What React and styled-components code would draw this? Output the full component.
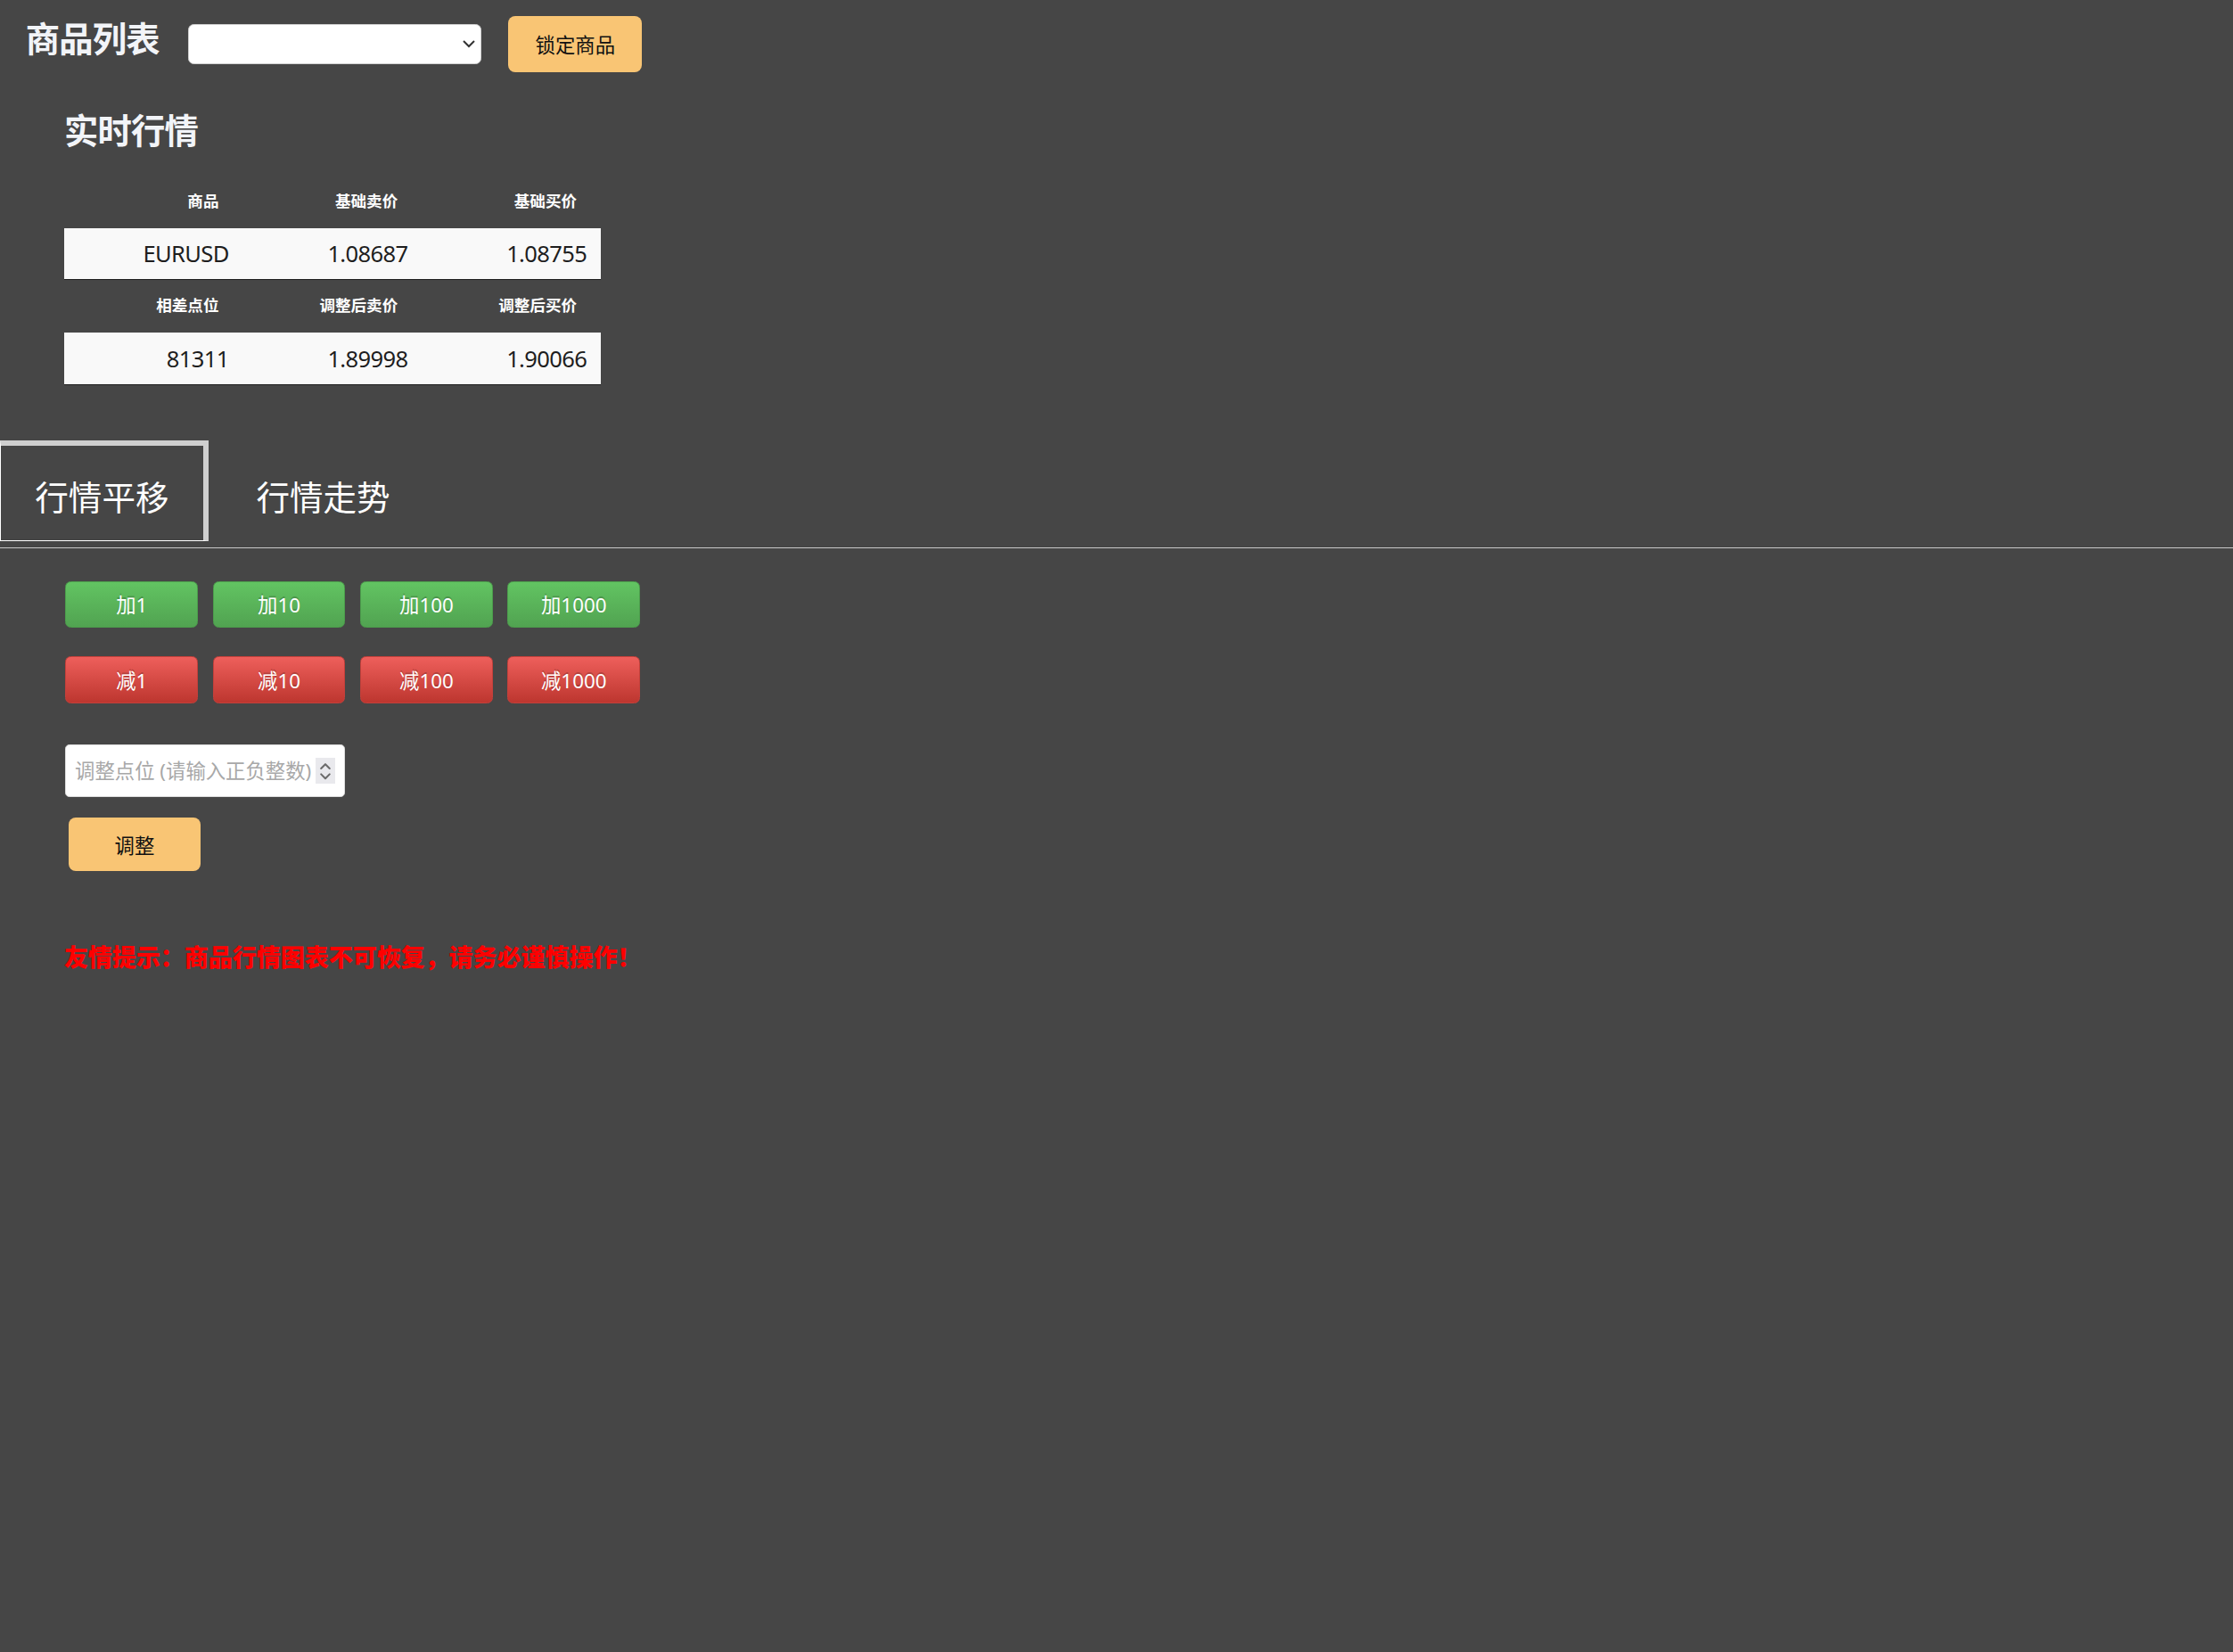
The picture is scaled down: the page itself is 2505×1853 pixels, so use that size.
import React from 'react'
import styled, { createGlobalStyle } from 'styled-components'

const GlobalStyle = createGlobalStyle`
  html, body {
    margin: 0;
    padding: 0;
    background: #464646;
    min-height: 100%;
  }
  body {
    font-family: "Noto Sans", "Noto Sans CJK SC", sans-serif;
  }
`

const quotes = [
  {
    heads: ['商品', '基础卖价', '基础买价'],
    values: ['EURUSD', '1.08687', '1.08755'],
  },
  {
    heads: ['相差点位', '调整后卖价', '调整后买价'],
    values: ['81311', '1.89998', '1.90066'],
  },
]

const steps = [1, 10, 100, 1000]

export default function App() {
  return (
    <Page>
      <GlobalStyle />
      <Header>
        <Title>商品列表</Title>
        <Select defaultValue="">
          <option value=""></option>
          <option value="EURUSD">EURUSD</option>
        </Select>
        <OrangeButton>锁定商品</OrangeButton>
      </Header>

      <Section>
        <SectionTitle>实时行情</SectionTitle>
        <Table>
          {quotes.map((q, i) => (
            <React.Fragment key={i}>
              {q.heads.map((h) => (
                <HeadCell key={h} tall={i > 0}>{h}</HeadCell>
              ))}
              {q.values.map((v, j) => (
                <DataCell key={j}>{v}</DataCell>
              ))}
            </React.Fragment>
          ))}
        </Table>
      </Section>

      <TabBar>
        <Tab active>行情平移</Tab>
        <Tab>行情走势</Tab>
      </TabBar>

      <Panel>
        <ButtonGrid>
          {steps.map((s) => (
            <StepButton key={'a' + s} kind="add">加{s}</StepButton>
          ))}
          {steps.map((s) => (
            <StepButton key={'s' + s} kind="sub">减{s}</StepButton>
          ))}
        </ButtonGrid>

        <InputBox>
          <Input type="text" placeholder="调整点位 (请输入正负整数)" />
          <Spinner>
            <svg width="10" height="14" viewBox="0 0 10 14" fill="none" stroke="#6b6b6b" strokeWidth="1.3" strokeLinecap="round" strokeLinejoin="round">
              <path d="M2 5 L5 2 L8 5" />
              <path d="M2 9 L5 12 L8 9" />
            </svg>
          </Spinner>
        </InputBox>

        <AdjustButton>调整</AdjustButton>

        <Warning>友情提示：商品行情图表不可恢复，请务必谨慎操作！</Warning>
      </Panel>
    </Page>
  )
}

const Page = styled.div`
  zoom: 1.5976;
  min-height: 1160px;
  background: #464646;
  color: #fff;
`

const Header = styled.div`
  display: flex;
  align-items: center;
  padding: 11px 0 0 18px;
`

const Title = styled.h2`
  margin: 0 20px 8px 0;
  font-size: 24px;
  line-height: 29px;
  font-weight: bold;
  color: #f2f4f8;
  letter-spacing: -0.5px;
`

const Select = styled.select`
  width: 206px;
  height: 28px;
  margin-right: 19px;
  border: 1px solid #d0d0d0;
  border-radius: 4px;
  background: #fff;
  color: #333;
  font-size: 14px;
`

const OrangeButton = styled.button`
  width: 94px;
  height: 40px;
  border: none;
  border-radius: 5px;
  background: #f9c574;
  color: #111;
  font-family: "Noto Sans", "Noto Sans CJK SC", sans-serif;
  font-size: 14px;
  padding: 0;
`

const Section = styled.div`
  padding-left: 45px;
  margin-top: 26px;
`

const SectionTitle = styled.h3`
  margin: 0;
  font-size: 24px;
  line-height: 30px;
  font-weight: bold;
  color: #f2f4f8;
  letter-spacing: -0.5px;
`

const Table = styled.div`
  display: grid;
  grid-template-columns: repeat(3, 1fr);
  width: 377px;
  margin-top: 17px;
`

const HeadCell = styled.div`
  height: ${({ tall }) => (tall ? 37 : 36)}px;
  display: flex;
  align-items: center;
  justify-content: flex-end;
  padding-right: 17px;
  padding-bottom: 3px;
  box-sizing: border-box;
  font-size: 11px;
  font-weight: bold;
  color: #fff;
`

const DataCell = styled.div`
  height: 36px;
  display: flex;
  align-items: center;
  justify-content: flex-end;
  padding-right: 10px;
  background: #f9f9f9;
  border-bottom: 1px solid #1e1e1e;
  font-size: 16px;
  letter-spacing: -0.4px;
  color: #1e1e1e;
`

const TabBar = styled.div`
  display: flex;
  align-items: flex-end;
  margin-top: 39px;
  padding-bottom: 4px;
  border-bottom: 1px solid #c8c8c8;
`

const Tab = styled.div`
  box-sizing: border-box;
  height: 71px;
  display: flex;
  align-items: center;
  padding: 3px 24px 0 24px;
  margin-right: 9px;
  font-size: 23.5px;
  color: #fff;
  border-style: solid;
  border-width: 4px 4px 1px 1px;
  border-color: ${({ active }) =>
    active ? '#cfcfcf #cfcfcf #fff #fff' : 'transparent'};
`

const Panel = styled.div`
  padding: 23px 0 0 46px;
`

const ButtonGrid = styled.div`
  display: grid;
  grid-template-columns: repeat(4, 93px);
  column-gap: 10.5px;
  row-gap: 20px;
`

const StepButton = styled.button`
  height: 33px;
  padding: 0;
  border-radius: 4px;
  font-family: "Noto Sans", "Noto Sans CJK SC", sans-serif;
  font-size: 14px;
  color: #fff;
  text-shadow: 0 -1px 0 rgba(0, 0, 0, 0.2);
  border: 1px solid
    ${({ kind }) => (kind === 'add' ? '#4c9d4c' : '#c3403b')};
  background: ${({ kind }) =>
    kind === 'add'
      ? 'linear-gradient(#62c462, #51a351)'
      : 'linear-gradient(#ee5f5b, #bd362f)'};
`

const InputBox = styled.div`
  box-sizing: border-box;
  display: flex;
  align-items: center;
  width: 196px;
  height: 37px;
  margin-top: 29px;
  padding: 0 6px 0 6px;
  background: #fff;
  border: 1px solid #ddd;
  border-radius: 3px;
`

const Input = styled.input`
  flex: 1;
  min-width: 0;
  border: none;
  outline: none;
  padding: 0;
  font-family: "Noto Sans", "Noto Sans CJK SC", sans-serif;
  font-size: 14px;
  color: #333;
  background: transparent;

  &::placeholder {
    color: #a8a8a8;
  }
`

const Spinner = styled.div`
  width: 14px;
  height: 18px;
  display: flex;
  align-items: center;
  justify-content: center;
  background: #e9e9ed;
`

const AdjustButton = styled(OrangeButton)`
  display: block;
  width: 93px;
  height: 38px;
  margin: 14px 0 0 2px;
`

const Warning = styled.p`
  margin: 49px 0 0 -1px;
  font-size: 17px;
  line-height: 22px;
  font-weight: 900;
  color: #ff0000;
  letter-spacing: -0.1px;
`
